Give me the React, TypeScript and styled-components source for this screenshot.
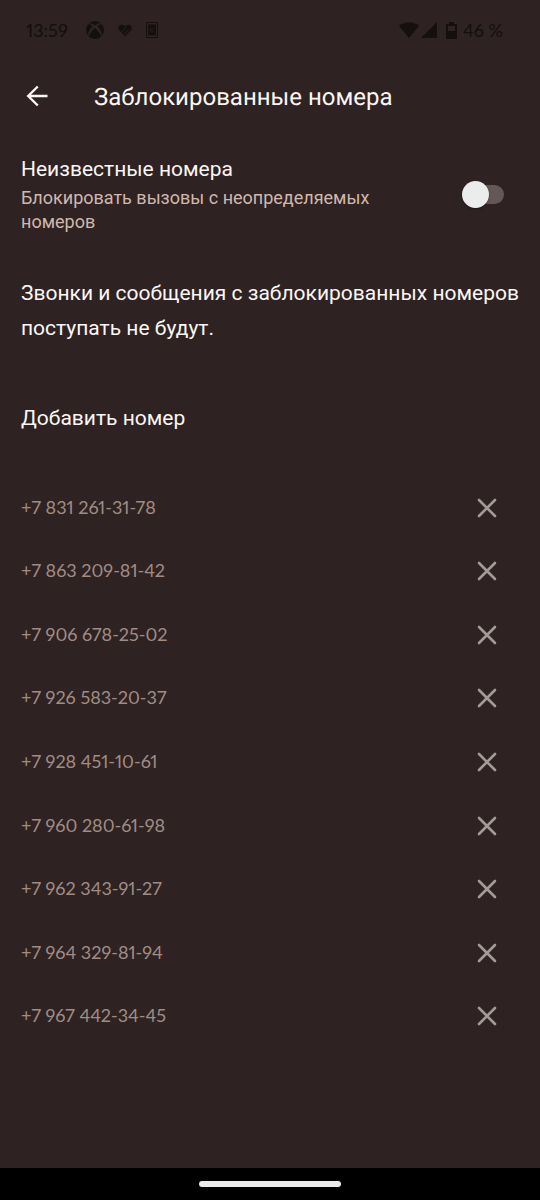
import React, { useState } from "react";
import styled, { createGlobalStyle } from "styled-components";

const GlobalStyle = createGlobalStyle`
  *, *::before, *::after { box-sizing: border-box; }
  body {
    margin: 0;
    background: #2e2322;
    color: #fbf6f4;
    font-family: Roboto, "Noto Sans", sans-serif;
  }
  h1, h2, p, ul { margin: 0; padding: 0; }
  button { border: 0; padding: 0; background: none; color: inherit; font: inherit; cursor: pointer; }
`;

const Screen = styled.div`
  min-height: 100vh;
  display: flex;
  flex-direction: column;
`;

const StatusBar = styled.header`
  height: 60px;
  padding: 0 37px 0 26px;
  display: flex;
  align-items: center;
  justify-content: space-between;
  color: #15100d;
  font-family: Lato, sans-serif;
  font-size: 18px;
  font-weight: 500;
  font-variant-numeric: proportional-nums;
`;

const StatusGroup = styled.div<{ $gap: number }>`
  display: flex;
  align-items: center;
  gap: ${({ $gap }) => $gap}px;
`;

const Clock = styled.span`
  min-width: 46px;
`;

const AppBar = styled.div`
  height: 74px;
  padding: 0 22px;
  display: flex;
  align-items: center;
  gap: 42px;
`;

const BackButton = styled.button`
  width: 30px;
  height: 32px;
  display: flex;
  justify-content: center;
  align-items: start;
  padding-top: 4px;
`;

const Title = styled.h1`
  font-size: 24px;
  font-weight: 400;
  font-kerning: normal;
  text-rendering: geometricPrecision;
  line-height: 32px;
`;

const Content = styled.main`
  flex: 1;
  padding: 21px 21px 0;
`;

const SettingRow = styled.label`
  display: flex;
  align-items: center;
  justify-content: space-between;
  padding-right: 15px;
  cursor: pointer;
`;

const SettingText = styled.span`
  display: flex;
  flex-direction: column;
  gap: 3px;
  max-width: 380px;
`;

const SettingTitle = styled.span`
  font-size: 21px;
  line-height: 28px;
`;

const SettingHint = styled.span`
  color: #d0b8ae;
  font-size: 18px;
  line-height: 24px;
`;

const Switch = styled.input`
  appearance: none;
  flex: none;
  display: grid;
  align-items: center;
  width: 42px;
  height: 28px;
  margin: 0;
  cursor: pointer;

  &::before,
  &::after {
    content: "";
    grid-area: 1 / 1;
  }
  &::before {
    height: 19px;
    margin-left: 4px;
    border-radius: 10px;
    background: #635857;
  }
  &::after {
    width: 27px;
    height: 27px;
    border-radius: 50%;
    background: #ececec;
    box-shadow: 0 1px 2px rgba(0, 0, 0, 0.4);
  }
  &:checked::after { justify-self: end; }
`;

const Note = styled.p`
  margin-top: 42px;
  font-size: 21px;
  line-height: 35px;
`;

const AddButton = styled.button`
  display: block;
  margin-top: 55px;
  font-size: 21px;
  line-height: 35px;
`;

const NumberList = styled.ul`
  height: 572px;
  margin-top: 39px;
  display: grid;
  grid-auto-rows: 1fr;
  list-style: none;
`;

const NumberRow = styled.li`
  display: flex;
  align-items: center;
  justify-content: space-between;
  padding-right: 18px;
  color: #a18c85;
  font-family: Lato, sans-serif;
  font-size: 18px;
  font-variant-numeric: proportional-nums;
  line-height: 24px;
`;

const RemoveButton = styled.button`
  width: 28px;
  height: 32px;
  display: flex;
  justify-content: center;
  align-items: end;
  padding-bottom: 5px;
  color: #a39b98;
`;

const NavigationBar = styled.footer`
  height: 32px;
  background: #000;
  display: grid;
  place-items: center;
`;

const Handle = styled.div`
  width: 142px;
  height: 6px;
  border-radius: 3px;
  background: #e9e9e9;
`;

const XboxIcon = () => (
  <svg width="18" height="18" viewBox="0 0 18 18" aria-hidden="true">
    <circle cx="9" cy="9" r="9" fill="currentColor" />
    <path d="M3.200 2.300C5 2 7 2.900 9 4.200c2-1.300 4-2.200 5.800-1.900l.9 1.100c-1.400-.5-2.600.2-4.200 1.800 2.400 2.600 4.500 6 4.300 8.800l-1 1C14.400 12.400 11.500 9 9 7c-2.500 2-5.400 5.400-5.800 8l-1-1C2 11.200 4.100 7.800 6.500 5.200 4.900 3.600 3.700 2.900 2.300 3.400z" fill="#2e2322" />
  </svg>
);

const FitIcon = () => (
  <svg width="14" height="13" viewBox="0 0 14 13" aria-hidden="true">
    <path d="M7 2.300C5.200.100 2.300.300 1 2.200-.2 4 .4 5.500 1.500 6.700L7 12.200l5.700-5.700c1.400-1.500 1.300-3.400.2-4.700C11.600.300 9.600.400 8.300 1.500z" fill="currentColor" />
    <path d="M3.300 8.300 8.600 3M6 10.300l5-5" fill="none" stroke="#2e2322" strokeWidth="1" strokeLinecap="round" />
  </svg>
);

const SimIcon = () => (
  <svg width="12" height="16" viewBox="0 0 12 16" fill="none" aria-hidden="true">
    <path d="M.5.500h11v15H.5z" stroke="currentColor" />
    <path d="M2 2.500h8v11H2z" fill="currentColor" />
    <path d="M4.500 6v4M7.500 6l-2 2 2 2" stroke="#2e2322" strokeOpacity=".7" />
  </svg>
);

const WifiIcon = () => (
  <svg width="20" height="16" viewBox="0 0 20 16" fill="currentColor" aria-hidden="true">
    <path d="M0 4C5.500-.9 14.500-.9 20 4L10 16z" />
  </svg>
);

const SignalIcon = () => (
  <svg width="16" height="16" viewBox="0 0 16 16" fill="currentColor" aria-hidden="true">
    <path d="M16 0v16H0z" />
  </svg>
);

const BatteryIcon = () => (
  <svg width="11" height="17" viewBox="0 0 11 17" aria-hidden="true">
    <path d="M3 0h5v2h2q1 0 1 1v13q0 1-1 1H1q-1 0-1-1V3q0-1 1-1h2z" fill="currentColor" />
    <path d="M2 4h7v5H2z" fill="#2e2322" />
  </svg>
);

const ArrowIcon = () => (
  <svg width="22" height="22" viewBox="0 0 22 22" fill="none" stroke="currentColor" strokeWidth="2.400" aria-hidden="true">
    <path d="M11.800 1.500 2.200 11l9.600 9.500M2.200 11h19.300" />
  </svg>
);

const CrossIcon = () => (
  <svg width="20" height="20" viewBox="0 0 20 20" fill="none" stroke="currentColor" strokeWidth="2.600" strokeLinecap="round" aria-hidden="true">
    <path d="m2 2 16 16M18 2 2 18" />
  </svg>
);

const blockedNumbers = [
  "+7 831 261-31-78",
  "+7 863 209-81-42",
  "+7 906 678-25-02",
  "+7 926 583-20-37",
  "+7 928 451-10-61",
  "+7 960 280-61-98",
  "+7 962 343-91-27",
  "+7 964 329-81-94",
  "+7 967 442-34-45",
];

export default function App() {
  const [blockUnknown, setBlockUnknown] = useState(false);

  return (
    <>
      <GlobalStyle />
      <Screen>
        <StatusBar>
          <StatusGroup $gap={14}>
            <Clock>13:59</Clock>
            <XboxIcon />
            <FitIcon />
            <SimIcon />
          </StatusGroup>
          <StatusGroup $gap={9}>
            <StatusGroup $gap={2}>
              <WifiIcon />
              <SignalIcon />
            </StatusGroup>
            <StatusGroup $gap={6}>
              <BatteryIcon />
              <span>46 %</span>
            </StatusGroup>
          </StatusGroup>
        </StatusBar>
        <AppBar>
          <BackButton type="button" aria-label="Назад">
            <ArrowIcon />
          </BackButton>
          <Title>Заблокированные номера</Title>
        </AppBar>
        <Content>
          <SettingRow>
            <SettingText>
              <SettingTitle>Неизвестные номера</SettingTitle>
              <SettingHint>Блокировать вызовы с неопределяемых номеров</SettingHint>
            </SettingText>
            <Switch
              type="checkbox"
              role="switch"
              checked={blockUnknown}
              onChange={(event) => setBlockUnknown(event.target.checked)}
            />
          </SettingRow>
          <Note>Звонки и сообщения с заблокированных номеров поступать не будут.</Note>
          <AddButton type="button">Добавить номер</AddButton>
          <NumberList>
            {blockedNumbers.map((number) => (
              <NumberRow key={number}>
                <span>{number}</span>
                <RemoveButton type="button" aria-label={`Удалить ${number}`}>
                  <CrossIcon />
                </RemoveButton>
              </NumberRow>
            ))}
          </NumberList>
        </Content>
        <NavigationBar>
          <Handle />
        </NavigationBar>
      </Screen>
    </>
  );
}
